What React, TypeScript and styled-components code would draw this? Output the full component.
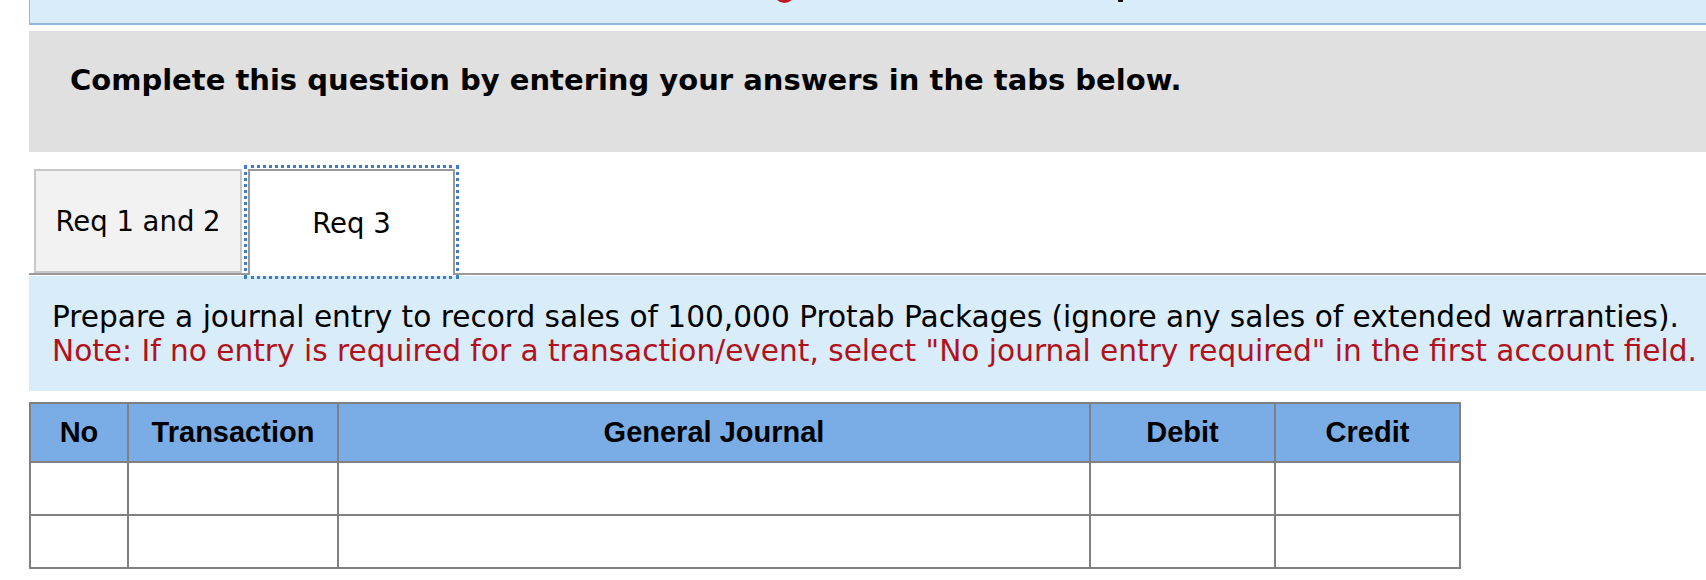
import React from 'react';
import styled, { createGlobalStyle } from 'styled-components';

const GlobalStyle = createGlobalStyle`
  body {
    margin: 0;
    background: #ffffff;
    overflow: hidden;
    font-family: Verdana, "DejaVu Sans", sans-serif;
    color: #000000;
  }
`;

const columns = [
  { key: 'no', label: 'No', width: 98 },
  { key: 'transaction', label: 'Transaction', width: 210 },
  { key: 'journal', label: 'General Journal', width: 752 },
  { key: 'debit', label: 'Debit', width: 185 },
  { key: 'credit', label: 'Credit', width: 185 },
];

const rows = [1, 2];

const App = () => {
  return (
    <Page>
      <GlobalStyle />
      <TopPanel>
        <TopStrip>
          <AlertDot />
          <Descender />
        </TopStrip>
      </TopPanel>
      <Banner>Complete this question by entering your answers in the tabs below.</Banner>
      <TabBar>
        <Tab>Req 1 and 2</Tab>
        <Tab $active>Req 3</Tab>
      </TabBar>
      <Instructions>
        <Line>Prepare a journal entry to record sales of 100,000 Protab Packages (ignore any sales of extended warranties).</Line>
        <Line $note>Note: If no entry is required for a transaction/event, select "No journal entry required" in the first account field.</Line>
      </Instructions>
      <Journal>
        <colgroup>
          {columns.map((c) => (
            <col key={c.key} style={{ width: c.width }} />
          ))}
        </colgroup>
        <thead>
          <tr>
            {columns.map((c) => (
              <HeadCell key={c.key}>{c.label}</HeadCell>
            ))}
          </tr>
        </thead>
        <tbody>
          {rows.map((r) => (
            <tr key={r}>
              {columns.map((c) => (
                <Cell key={c.key} />
              ))}
            </tr>
          ))}
        </tbody>
      </Journal>
    </Page>
  );
};

export default App;

const Page = styled.div`
  padding-left: 29px;
  width: 1720px;
`;

const TopPanel = styled.div`
  height: 23px;
  background: #d9ecfa;
  border-left: 1px solid #8fb8dc;
  border-bottom: 2px solid #8fb8dc;
  overflow: hidden;
`;

const TopStrip = styled.div`
  display: flex;
  align-items: flex-end;
  height: 3px;
  padding-left: 744px;
  gap: 323px;
`;

const AlertDot = styled.span`
  flex: none;
  width: 21px;
  height: 21px;
  border-radius: 50%;
  background: #c0161e;
`;

const Descender = styled.span`
  flex: none;
  width: 5px;
  height: 2px;
  background: #111111;
  align-self: flex-start;
`;

const Banner = styled.div`
  box-sizing: border-box;
  margin-top: 6px;
  height: 121px;
  padding: 32px 0 0 41px;
  background: #e0e0e0;
  font-size: 29px;
  font-weight: bold;
  white-space: nowrap;
`;

const TabBar = styled.div`
  margin-top: 17px;
  display: flex;
  gap: 6px;
  padding-left: 5px;
  border-bottom: 2px solid #999999;
`;

const Tab = styled.div<{ $active?: boolean }>`
  box-sizing: border-box;
  width: ${(p) => (p.$active ? 207 : 208)}px;
  height: ${(p) => (p.$active ? 106 : 104)}px;
  margin-bottom: ${(p) => (p.$active ? -2 : 0)}px;
  display: flex;
  align-items: center;
  justify-content: center;
  font-size: 27.5px;
  background: ${(p) => (p.$active ? '#ffffff' : '#f2f2f2')};
  border: 2px solid ${(p) => (p.$active ? '#999999' : '#c8c8c8')};
  border-bottom: ${(p) => (p.$active ? 'none' : '2px solid #c8c8c8')};
  outline: ${(p) => (p.$active ? '3px dotted #3d7cc9' : 'none')};
  outline-offset: 1px;
`;

const Instructions = styled.div`
  margin-top: 1px;
  padding: 24px 0 23px 23px;
  background: #d9ecfa;
`;

const Line = styled.div<{ $note?: boolean }>`
  font-size: 29.6px;
  line-height: 34px;
  white-space: nowrap;
  color: ${(p) => (p.$note ? '#b3111a' : '#000000')};
`;

const Journal = styled.table`
  margin-top: 11px;
  border-collapse: collapse;
  table-layout: fixed;
  width: 1430px;
  font-family: Arial, "Liberation Sans", sans-serif;
`;

const HeadCell = styled.th`
  height: 57px;
  padding: 0;
  background: #7aade6;
  border: 2px solid #808080;
  font-size: 29px;
  font-weight: bold;
  text-align: center;
`;

const Cell = styled.td`
  height: 51px;
  padding: 0;
  background: #ffffff;
  border: 2px solid #808080;
`;
